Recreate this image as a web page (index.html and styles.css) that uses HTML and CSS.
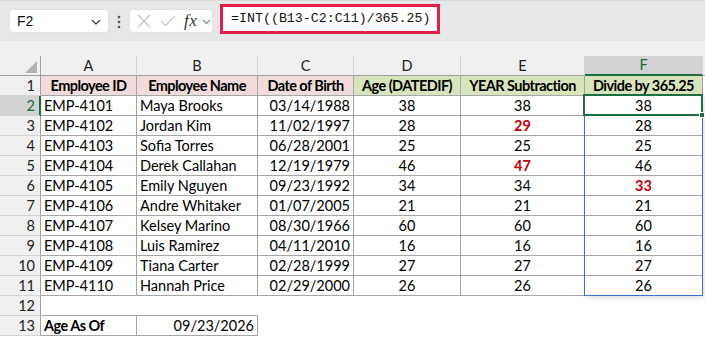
FILE: index.html
```html
<!DOCTYPE html>
<html>
<head>
<meta charset="utf-8">
<link rel="stylesheet" href="styles.css">
</head>
<body>
<div class="toolbar">
  <div class="namebox">
    <span class="nb-text">F2</span>
    <svg class="chev" width="10" height="6" viewBox="0 0 10 6"><path d="M1 1 L5 5 L9 1" fill="none" stroke="#444" stroke-width="1.3"/></svg>
  </div>
  <svg class="dots" width="4" height="14" viewBox="0 0 4 14"><circle cx="2" cy="2" r="1.3" fill="#555"/><circle cx="2" cy="7" r="1.3" fill="#555"/><circle cx="2" cy="12" r="1.3" fill="#555"/></svg>
  <div class="fxbox">
    <svg width="14" height="14" viewBox="0 0 14 14"><path d="M1 1 L13 13 M13 1 L1 13" stroke="#c4c4c4" stroke-width="1.2" fill="none"/></svg>
    <svg class="check" width="16" height="12" viewBox="0 0 16 12"><path d="M1 6 L5.5 10.5 L15 1" stroke="#c4c4c4" stroke-width="1.2" fill="none"/></svg>
    <span class="fx">fx</span>
    <svg class="chev2" width="9" height="6" viewBox="0 0 9 6"><path d="M1 1 L4.5 4.5 L8 1" fill="none" stroke="#888" stroke-width="1.2"/></svg>
  </div>
  <div class="formula">=INT((B13-C2:C11)/365.25)</div>
</div>
<div class="gap"></div>
<div class="sheet">
  <div class="grid">
    <div class="ch corner"><span class="tri"></span></div>
    <div class="ch">A</div><div class="ch">B</div><div class="ch">C</div><div class="ch">D</div><div class="ch">E</div><div class="ch sel">F</div><div class="ch end"></div>

    <div class="rh">1</div>
    <div class="c b hp">Employee ID</div><div class="c b hp">Employee Name</div><div class="c b hp">Date of Birth</div><div class="c b hg">Age (DATEDIF)</div><div class="c b hg">YEAR Subtraction</div><div class="c b hg">Divide by 365.25</div><div class="e"></div>

    <div class="rh sel">2</div>
    <div class="c l">EMP-4101</div><div class="c l">Maya Brooks</div><div class="c r">03/14/1988</div><div class="c m">38</div><div class="c m">38</div><div class="c m">38</div><div class="e"></div>

    <div class="rh">3</div>
    <div class="c l">EMP-4102</div><div class="c l">Jordan Kim</div><div class="c r">11/02/1997</div><div class="c m">28</div><div class="c m red">29</div><div class="c m">28</div><div class="e"></div>

    <div class="rh">4</div>
    <div class="c l">EMP-4103</div><div class="c l">Sofia Torres</div><div class="c r">06/28/2001</div><div class="c m">25</div><div class="c m">25</div><div class="c m">25</div><div class="e"></div>

    <div class="rh">5</div>
    <div class="c l">EMP-4104</div><div class="c l">Derek Callahan</div><div class="c r">12/19/1979</div><div class="c m">46</div><div class="c m red">47</div><div class="c m">46</div><div class="e"></div>

    <div class="rh">6</div>
    <div class="c l">EMP-4105</div><div class="c l">Emily Nguyen</div><div class="c r">09/23/1992</div><div class="c m">34</div><div class="c m">34</div><div class="c m red">33</div><div class="e"></div>

    <div class="rh">7</div>
    <div class="c l">EMP-4106</div><div class="c l">Andre Whitaker</div><div class="c r">01/07/2005</div><div class="c m">21</div><div class="c m">21</div><div class="c m">21</div><div class="e"></div>

    <div class="rh">8</div>
    <div class="c l">EMP-4107</div><div class="c l">Kelsey Marino</div><div class="c r">08/30/1966</div><div class="c m">60</div><div class="c m">60</div><div class="c m">60</div><div class="e"></div>

    <div class="rh">9</div>
    <div class="c l">EMP-4108</div><div class="c l">Luis Ramirez</div><div class="c r">04/11/2010</div><div class="c m">16</div><div class="c m">16</div><div class="c m">16</div><div class="e"></div>

    <div class="rh">10</div>
    <div class="c l">EMP-4109</div><div class="c l">Tiana Carter</div><div class="c r">02/28/1999</div><div class="c m">27</div><div class="c m">27</div><div class="c m">27</div><div class="e"></div>

    <div class="rh">11</div>
    <div class="c l">EMP-4110</div><div class="c l">Hannah Price</div><div class="c r">02/29/2000</div><div class="c m">26</div><div class="c m">26</div><div class="c m">26</div><div class="e"></div>

    <div class="rh">12</div>
    <div class="n bb"></div><div class="n bb"></div><div class="n"></div><div class="n"></div><div class="n"></div><div class="n"></div><div class="e"></div>

    <div class="rh">13</div>
    <div class="c l b">Age As Of</div><div class="c r">09/23/2026</div><div class="n"></div><div class="n"></div><div class="n"></div><div class="n"></div><div class="e"></div>
  </div>
  <div class="range"></div>
  <div class="active"><span class="handle"></span></div>
</div>
</body>
</html>
```
FILE: styles.css
```css
* { box-sizing: border-box; }
html, body { margin: 0; padding: 0; background: #fff; }
body {
  width: 705px;
  height: 337px;
  overflow: hidden;
  font-family: "Lato", "Noto Sans", sans-serif;
  font-size: 14.5px;
  color: #000;
}
.toolbar {
  height: 41px;
  background: #e7e7e7;
  border-top: 1px solid #dadada;
  display: flex;
  align-items: flex-start;
  position: relative;
}
.namebox {
  margin: 8px 0 0 9px;
  width: 100px;
  height: 24px;
  background: #fff;
  border: 1px solid #e2e2e2;
  border-radius: 4px;
  display: flex;
  align-items: center;
  justify-content: space-between;
  padding: 0 7px 0 7px;
}
.nb-text { font-family: "Liberation Sans", sans-serif; font-size: 14px; color: #111; }
.chev { margin-top: 1px; }
.dots { margin: 14px 0 0 8px; }
.fxbox {
  margin: 8px 0 0 8px;
  width: 84px;
  height: 24px;
  background: #fff;
  border: 1px solid #e2e2e2;
  border-radius: 4px;
  display: flex;
  align-items: center;
  padding-left: 7px;
}
.check { margin-left: 9px; }
.fx {
  font-family: "Liberation Serif", serif;
  font-style: italic;
  font-size: 17px;
  color: #333;
  margin-left: 8px;
  letter-spacing: 0.5px;
}
.chev2 { margin-left: 5px; margin-top: 1px; }
.formula {
  margin: 3px 0 0 7px;
  width: 220px;
  height: 30px;
  background: #fff;
  border: 3px solid #e21f4b;
  font-family: "Liberation Mono", monospace;
  font-size: 13.3px;
  line-height: 24px;
  padding-left: 8px;
  color: #111;
}
.gap { height: 15px; background: #f0f0f0; }
.sheet { position: relative; }
.grid {
  display: grid;
  grid-template-columns: 41px 96px 121px 96px 107px 124px 118px 1fr;
  grid-auto-rows: 20px;
}
.ch {
  background: #f0f0f0;
  border-right: 1px solid #d5d5d5;
  border-bottom: 1px solid #a0a0a0;
  text-align: center;
  font-size: 14.5px;
  line-height: 19px;
  color: #222;
}
.ch.corner { position: relative; border-right: 1px solid #a0a0a0; }
.tri {
  position: absolute;
  right: 3px;
  bottom: 2px;
  width: 0; height: 0;
  border-left: 12px solid transparent;
  border-bottom: 12px solid #b3b3b3;
}
.ch.sel {
  background: #d2d2d2;
  color: #1b6b3f;
  border-bottom: 2px solid #1e6e41;
  line-height: 18px;
}
.ch.end { border-right: none; }
.rh {
  background: #f0f0f0;
  border-right: 1px solid #a0a0a0;
  border-bottom: 1px solid #d5d5d5;
  text-align: right;
  padding-right: 5px;
  line-height: 20px;
  color: #222;
}
.rh.sel {
  background: #d2d2d2;
  color: #1b6b3f;
  border-right: 2px solid #1e6e41;
  padding-right: 4px;
}
.c {
  border-right: 1px solid #a6a6a6;
  border-bottom: 1px solid #a6a6a6;
  line-height: 20px;
  white-space: nowrap;
  overflow: hidden;
  padding: 0 3px;
}
.n.bb { border-bottom: 1px solid #a6a6a6; }
.l { text-align: left; }
.r { text-align: right; }
.m { text-align: center; }
.b { font-weight: 700; letter-spacing: -0.55px; }
.hp { background: #f2dcdb; text-align: center; }
.hg { background: #d8e4bc; text-align: center; }
.red { color: #c00000; font-weight: 700; letter-spacing: 0; }
.range {
  position: absolute;
  left: 584px;
  top: 39px;
  width: 119px;
  height: 201px;
  border: 1px solid #3c6fd1;
  box-shadow: 2px 2px 5px rgba(0,0,0,0.12);
  pointer-events: none;
}
.active {
  position: absolute;
  left: 583px;
  top: 38px;
  width: 120px;
  height: 22px;
  border: 2px solid #1e6e41;
}
.handle {
  position: absolute;
  right: -4px;
  bottom: -4px;
  width: 6px;
  height: 6px;
  background: #1e6e41;
  border: 1px solid #fff;
}
```
